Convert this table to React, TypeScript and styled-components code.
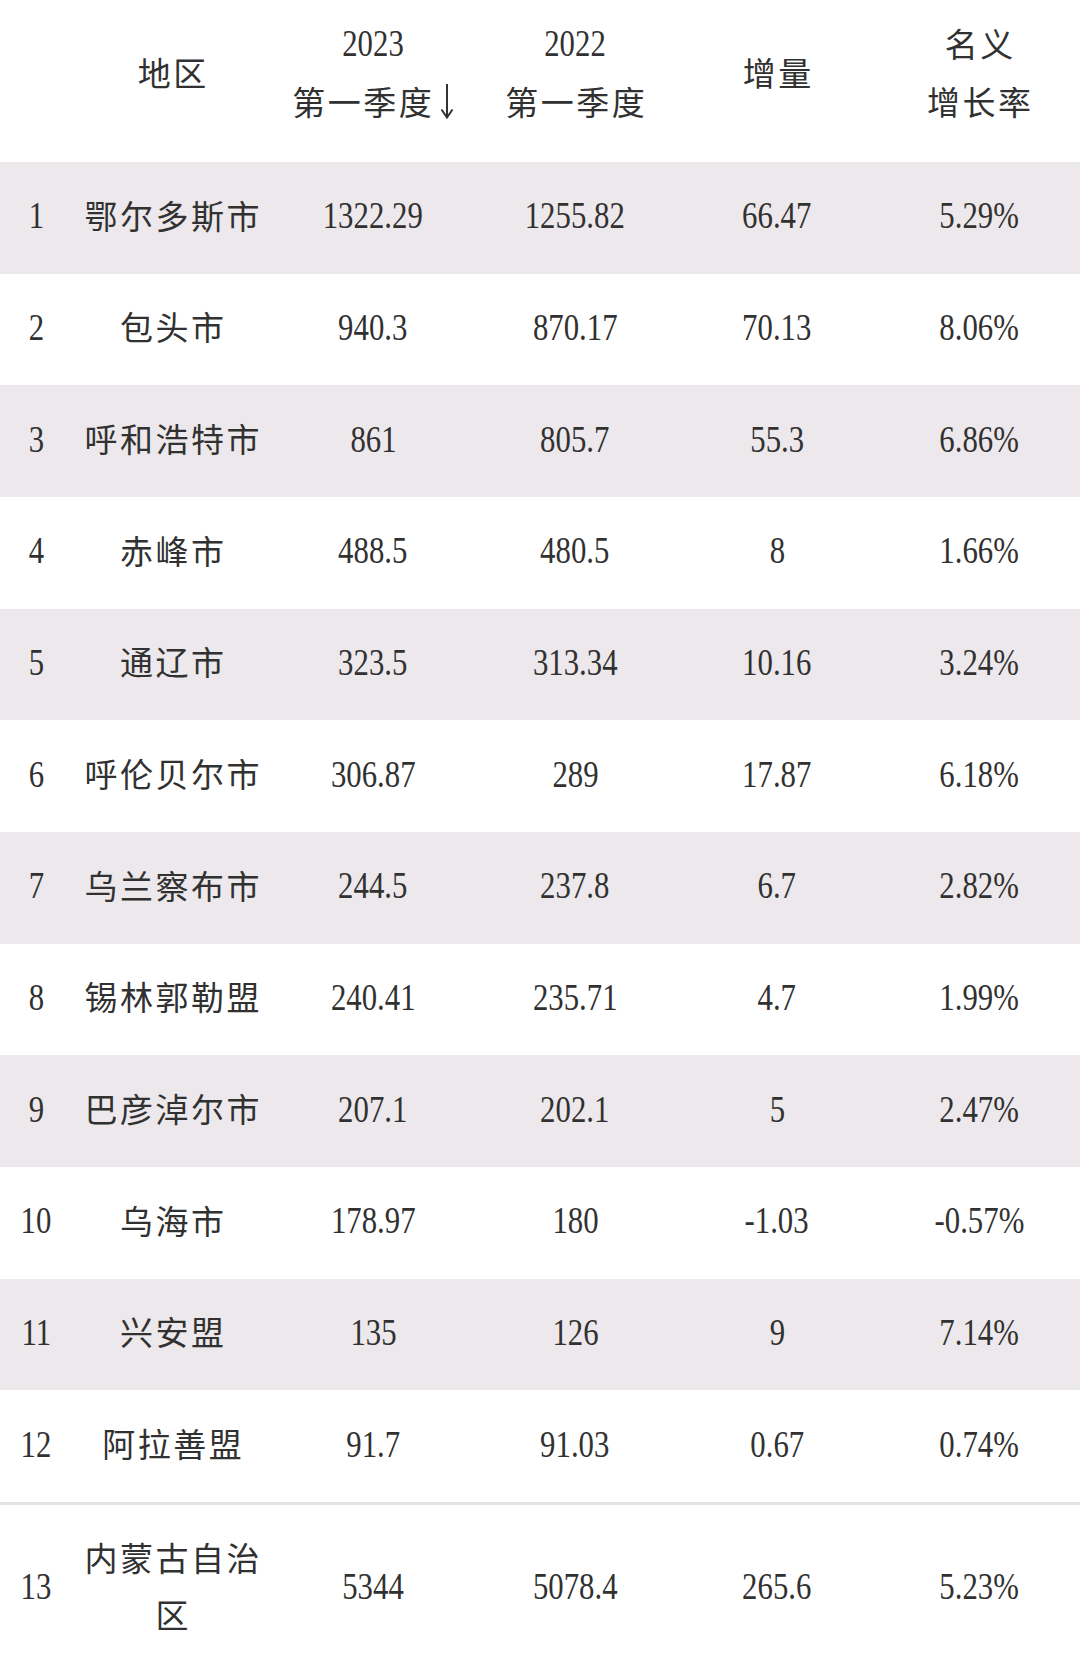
import React from "react";
import styled, { createGlobalStyle } from "styled-components";

const GlobalStyle = createGlobalStyle`
  html, body {
    margin: 0;
    padding: 0;
    background: #ffffff;
  }
`;

type Row = {
  rank: number;
  region: string;
  q2023: string;
  q2022: string;
  delta: string;
  rate: string;
};

const rows: Row[] = [
  { rank: 1, region: "鄂尔多斯市", q2023: "1322.29", q2022: "1255.82", delta: "66.47", rate: "5.29%" },
  { rank: 2, region: "包头市", q2023: "940.3", q2022: "870.17", delta: "70.13", rate: "8.06%" },
  { rank: 3, region: "呼和浩特市", q2023: "861", q2022: "805.7", delta: "55.3", rate: "6.86%" },
  { rank: 4, region: "赤峰市", q2023: "488.5", q2022: "480.5", delta: "8", rate: "1.66%" },
  { rank: 5, region: "通辽市", q2023: "323.5", q2022: "313.34", delta: "10.16", rate: "3.24%" },
  { rank: 6, region: "呼伦贝尔市", q2023: "306.87", q2022: "289", delta: "17.87", rate: "6.18%" },
  { rank: 7, region: "乌兰察布市", q2023: "244.5", q2022: "237.8", delta: "6.7", rate: "2.82%" },
  { rank: 8, region: "锡林郭勒盟", q2023: "240.41", q2022: "235.71", delta: "4.7", rate: "1.99%" },
  { rank: 9, region: "巴彦淖尔市", q2023: "207.1", q2022: "202.1", delta: "5", rate: "2.47%" },
  { rank: 10, region: "乌海市", q2023: "178.97", q2022: "180", delta: "-1.03", rate: "-0.57%" },
  { rank: 11, region: "兴安盟", q2023: "135", q2022: "126", delta: "9", rate: "7.14%" },
  { rank: 12, region: "阿拉善盟", q2023: "91.7", q2022: "91.03", delta: "0.67", rate: "0.74%" },
];

const total: Row = {
  rank: 13,
  region: "内蒙古自治区",
  q2023: "5344",
  q2022: "5078.4",
  delta: "265.6",
  rate: "5.23%",
};

const Table = styled.div`
  width: 1080px;
  color: #313131;
`;

const HeaderRow = styled.div`
  display: grid;
  grid-template-columns: 72px 200px repeat(4, 1fr);
  align-items: center;
  box-sizing: border-box;
  height: 162px;
  padding: 14px 0 32px;
`;

const HeaderCell = styled.div`
  display: flex;
  flex-direction: column;
  align-items: center;
  justify-content: center;
`;

const HeaderLine = styled.div`
  display: flex;
  align-items: center;
  justify-content: center;
  height: 58px;
`;

const BodyRow = styled.div<{ $shaded?: boolean; $total?: boolean }>`
  display: grid;
  grid-template-columns: 72px 200px repeat(4, 1fr);
  align-items: center;
  box-sizing: border-box;
  min-height: 111.67px;
  background: ${(p) => (p.$shaded ? "#ece8eb" : "#ffffff")};
  border-top: ${(p) => (p.$total ? "3px solid #e5e3e4" : "none")};
  padding: ${(p) => (p.$total ? "24px 0 28px" : "0 0 5px")};
`;

const Cell = styled.div`
  display: flex;
  justify-content: center;
  align-items: center;
`;

const Num = styled.span`
  display: inline-block;
  font-family: "Liberation Serif", "Times New Roman", serif;
  font-size: 38px;
  line-height: 1;
  transform: scaleX(0.81);
  white-space: nowrap;
`;

const Han = styled.span`
  font-family: "Noto Sans CJK SC", sans-serif;
  font-size: 33px;
  line-height: 57px;
  letter-spacing: 2.5px;
  text-align: center;
  padding-left: 2.5px;
`;

const RegionCell = styled.div`
  text-align: center;
  font-family: "Noto Sans CJK SC", sans-serif;
  font-size: 33px;
  line-height: 57px;
  letter-spacing: 2.5px;
  padding-left: 2.5px;
`;

const SortArrow = () => (
  <svg width="18" height="38" viewBox="0 0 18 38" style={{ marginLeft: 4 }}>
    <path d="M9 2 V35" stroke="#333" strokeWidth="2" fill="none" />
    <path d="M3.5 27.5 L9 35.5 L14.5 27.5" stroke="#333" strokeWidth="2" fill="none" />
  </svg>
);

const DataRow = ({ row, shaded, isTotal }: { row: Row; shaded?: boolean; isTotal?: boolean }) => (
  <BodyRow $shaded={shaded} $total={isTotal}>
    <Cell>
      <Num>{row.rank}</Num>
    </Cell>
    <RegionCell>{row.region}</RegionCell>
    <Cell>
      <Num>{row.q2023}</Num>
    </Cell>
    <Cell>
      <Num>{row.q2022}</Num>
    </Cell>
    <Cell>
      <Num>{row.delta}</Num>
    </Cell>
    <Cell>
      <Num>{row.rate}</Num>
    </Cell>
  </BodyRow>
);

export default function App() {
  return (
    <>
      <GlobalStyle />
      <Table>
        <HeaderRow>
          <HeaderCell />
          <HeaderCell>
            <HeaderLine>
              <Han>地区</Han>
            </HeaderLine>
          </HeaderCell>
          <HeaderCell>
            <HeaderLine>
              <Num>2023</Num>
            </HeaderLine>
            <HeaderLine>
              <Han>第一季度</Han>
              <SortArrow />
            </HeaderLine>
          </HeaderCell>
          <HeaderCell>
            <HeaderLine>
              <Num>2022</Num>
            </HeaderLine>
            <HeaderLine>
              <Han>第一季度</Han>
            </HeaderLine>
          </HeaderCell>
          <HeaderCell>
            <HeaderLine>
              <Han>增量</Han>
            </HeaderLine>
          </HeaderCell>
          <HeaderCell>
            <HeaderLine>
              <Han>名义</Han>
            </HeaderLine>
            <HeaderLine>
              <Han>增长率</Han>
            </HeaderLine>
          </HeaderCell>
        </HeaderRow>

        {rows.map((r, i) => (
          <DataRow key={r.rank} row={r} shaded={i % 2 === 0} />
        ))}
        <DataRow row={total} isTotal />
      </Table>
    </>
  );
}
